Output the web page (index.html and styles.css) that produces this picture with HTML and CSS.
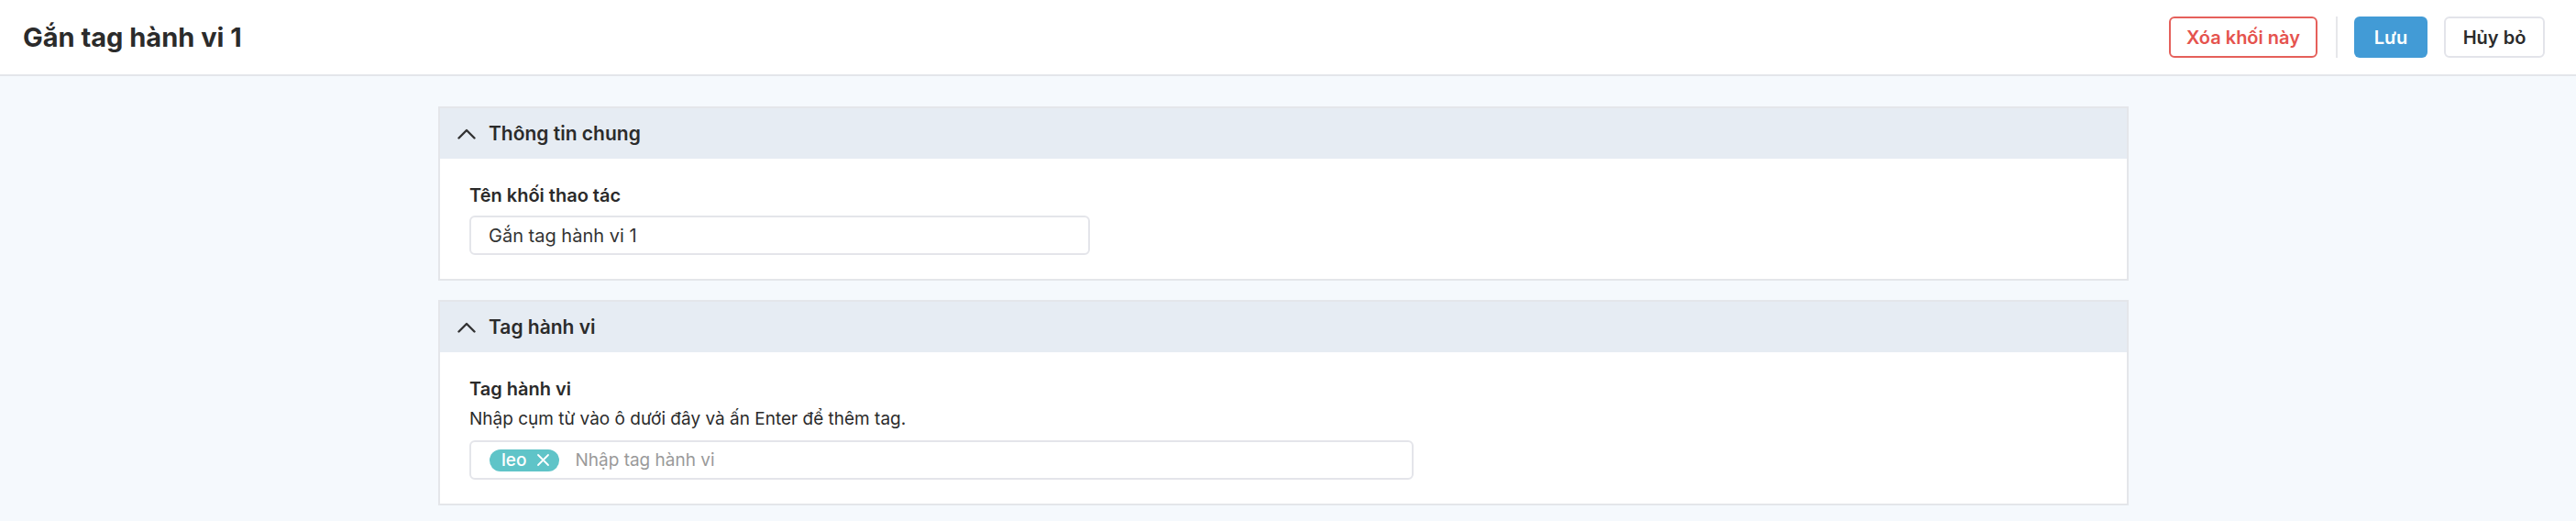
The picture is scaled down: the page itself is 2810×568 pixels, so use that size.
FILE: index.html
```html
<!DOCTYPE html>
<html lang="vi">
<head>
<meta charset="utf-8">
<title>Gắn tag hành vi 1</title>
<link rel="stylesheet" href="styles.css">
</head>
<body>
<header class="topbar">
  <h1 class="title">Gắn tag hành vi 1</h1>
  <div class="actions">
    <button class="btn btn-danger">Xóa khối này</button>
    <span class="divider"></span>
    <button class="btn btn-primary">Lưu</button>
    <button class="btn btn-default">Hủy bỏ</button>
  </div>
</header>
<main class="main">
  <div class="content">
    <section class="panel">
      <div class="panel-head">
        <svg class="chev" width="20" height="12" viewBox="0 0 20 12"><path d="M1.5 10.5 L10 2 L18.5 10.5" fill="none" stroke="#333" stroke-width="2.4" stroke-linecap="round" stroke-linejoin="round"/></svg>
        <span class="panel-title">Thông tin chung</span>
      </div>
      <div class="panel-body">
        <div class="label">Tên khối thao tác</div>
        <div class="input input-name">Gắn tag hành vi 1</div>
      </div>
    </section>
    <section class="panel">
      <div class="panel-head">
        <svg class="chev" width="20" height="12" viewBox="0 0 20 12"><path d="M1.5 10.5 L10 2 L18.5 10.5" fill="none" stroke="#333" stroke-width="2.4" stroke-linecap="round" stroke-linejoin="round"/></svg>
        <span class="panel-title">Tag hành vi</span>
      </div>
      <div class="panel-body">
        <div class="label">Tag hành vi</div>
        <div class="hint">Nhập cụm từ vào ô dưới đây và ấn Enter để thêm tag.</div>
        <div class="input input-tags">
          <span class="tag">leo<svg class="tag-x" width="15" height="15" viewBox="0 0 15 15"><path d="M2 2 L13 13 M13 2 L2 13" stroke="#fff" stroke-width="1.8" stroke-linecap="round"/></svg></span>
          <span class="placeholder">Nhập tag hành vi</span>
        </div>
      </div>
    </section>
  </div>
</main>
</body>
</html>
```

FILE: styles.css
```css
* { box-sizing: border-box; }
html, body { margin: 0; padding: 0; }
body {
  font-family: Inter, "Noto Sans", "Liberation Sans", sans-serif;
  color: #2b2b2b;
  background: #f5f9fd;
  height: 568px;
  overflow: hidden;
}
.topbar {
  height: 83px;
  background: #fff;
  border-bottom: 2px solid #e4e6ea;
  display: flex;
  align-items: center;
  justify-content: space-between;
  padding: 0 34px 0 25px;
}
.title {
  margin: 0;
  font-size: 29px;
  font-weight: 700;
  color: #2b2b2b;
}
.actions {
  display: flex;
  align-items: center;
}
.btn {
  height: 45px;
  border-radius: 6px;
  font-family: inherit;
  font-size: 20px;
  font-weight: 600;
  padding: 0;
  cursor: pointer;
}
.btn-danger {
  width: 162px;
  background: #fff;
  border: 2px solid #e5605b;
  color: #e5534e;
}
.divider {
  width: 2px;
  height: 45px;
  background: #e6e7ea;
  margin: 0 18px 0 20px;
}
.btn-primary {
  width: 80px;
  background: #429bd6;
  border: 0;
  color: #fff;
}
.btn-default {
  width: 110px;
  margin-left: 18px;
  background: #fff;
  border: 2px solid #e3e4ea;
  color: #2b2b2b;
}
.main {
  padding: 33px 10px 0 0;
}
.content {
  width: 1844px;
  margin: 0 auto;
  display: flex;
  flex-direction: column;
  gap: 21px;
}
.panel {
  background: #fff;
  border: 2px solid #e4e6ea;
}
.panel-head {
  height: 55px;
  background: #e6ecf3;
  display: flex;
  align-items: center;
  padding-left: 19px;
}
.chev { margin-right: 14px; }
.panel-title {
  font-size: 21px;
  font-weight: 600;
  color: #2b2b2b;
}
.panel-body {
  padding: 26px 32px 26px 32px;
}
.label {
  font-size: 20px;
  font-weight: 600;
  line-height: 28px;
  color: #2a2a2a;
}
.hint {
  font-size: 19px;
  line-height: 26px;
  margin-top: 6px;
  color: #2b2b2b;
}
.input {
  height: 43px;
  border: 2px solid #e4e5ea;
  border-radius: 6px;
  display: flex;
  align-items: center;
  font-size: 20px;
  color: #333;
  background: #fff;
}
.input-name {
  width: 677px;
  margin-top: 8px;
  padding-left: 19px;
}
.input-tags {
  width: 1030px;
  margin-top: 10px;
  padding-left: 20px;
}
.tag {
  display: inline-flex;
  align-items: center;
  height: 24px;
  padding: 0 10px 0 13px;
  border-radius: 12px;
  background: #5fc4c8;
  color: #fff;
  font-size: 19px;
  font-weight: 500;
}
.tag-x { margin-left: 11px; }
.placeholder {
  margin-left: 17px;
  color: #9a9a9a;
  font-size: 19px;
}
```
